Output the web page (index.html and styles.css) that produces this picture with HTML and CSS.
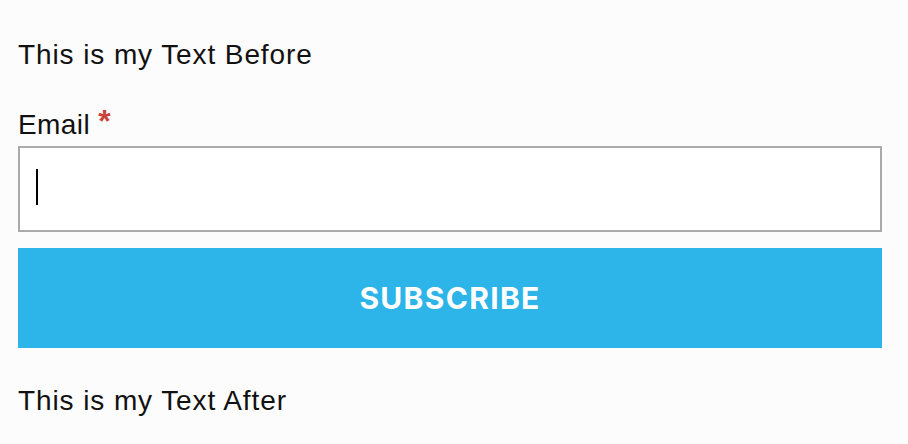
FILE: index.html
```html
<!DOCTYPE html>
<html lang="en">
<head>
  <meta charset="UTF-8">
  <title>Subscribe</title>
  <link rel="stylesheet" href="styles.css">
</head>
<body>
  <form class="subscribe">
    <p class="note">This is my Text Before</p>
    <label class="field-label" for="email">Email <span class="required">*</span></label>
    <div class="input-wrap">
      <input type="email" id="email" class="field">
      <span class="caret"></span>
    </div>
    <button type="submit" class="btn">SUBSCRIBE</button>
    <p class="note">This is my Text After</p>
  </form>
</body>
</html>
```

FILE: styles.css
```css
body {
  margin: 0;
  background: #fcfcfc;
  font-family: "Liberation Sans", Arial, sans-serif;
  color: #111;
}
.subscribe {
  display: flex;
  flex-direction: column;
  padding: 32px 26px 0 18px;
}
.note {
  margin: 0;
  font-size: 28px;
  line-height: 46px;
  letter-spacing: 0.9px;
}
.field-label {
  margin-top: 30px;
  font-size: 28px;
  line-height: 34px;
  letter-spacing: 0.4px;
}
.required {
  color: #c9453b;
  font-size: 32px;
  font-weight: 700;
  line-height: 0;
  vertical-align: 2px;
}
.input-wrap {
  position: relative;
  margin-top: 4px;
}
.field {
  display: block;
  width: 100%;
  height: 86px;
  box-sizing: border-box;
  border: 2px solid #aaa;
  background: #fff;
  font-size: 28px;
  padding: 0 16px;
  outline: none;
}
.caret {
  position: absolute;
  left: 18px;
  top: 23px;
  width: 2px;
  height: 36px;
  background: #000;
}
.btn {
  margin-top: 16px;
  height: 100px;
  border: none;
  background: #2db4e8;
  color: #fff;
  font-family: Inter, "Liberation Sans", sans-serif;
  font-weight: 700;
  font-size: 30px;
  letter-spacing: 1.3px;
}
.btn + .note {
  margin-top: 30px;
}
```
